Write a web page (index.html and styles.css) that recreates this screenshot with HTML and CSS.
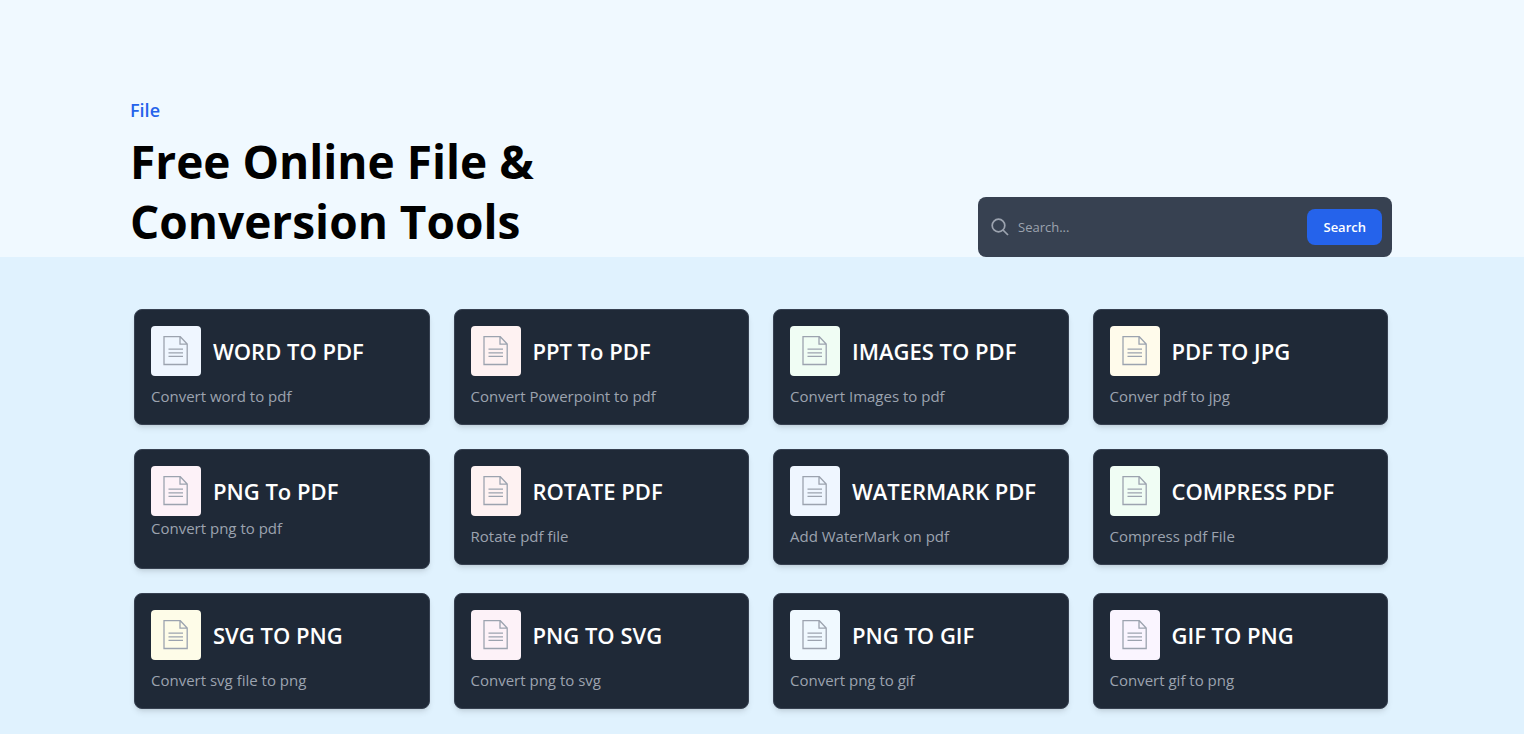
FILE: index.html
```html
<!DOCTYPE html>
<html lang="en">
<head>
<meta charset="utf-8">
<meta name="viewport" content="width=device-width, initial-scale=1">
<title>Free Online File &amp; Conversion Tools</title>
<link rel="stylesheet" href="styles.css">
</head>
<body>
<svg class="sprite" aria-hidden="true">
  <symbol id="doc" viewBox="0 0 26 30">
    <path d="M1 .7H17.300L24.200 8V28.500H1Z M17 .7V8.200H24.200" fill="none" stroke="#9ca3af" stroke-width="1.300"/>
    <path d="M5.500 13.200H20 M5.500 16.800H20 M5.500 20.300H20" fill="none" stroke="#9ca3af" stroke-width="1.300"/>
  </symbol>
</svg>
<header class="hero">
  <div class="hero-text">
    <p class="eyebrow">File</p>
    <h1 class="title">Free Online File &amp; Conversion Tools</h1>
  </div>
  <form class="search" role="search">
    <svg class="search-icon" viewBox="0 0 20 20" aria-hidden="true"><circle cx="8.500" cy="8.500" r="6.300"/><path d="M13 13L18 18"/></svg>
    <input class="search-input" type="search" placeholder="Search..." aria-label="Search tools">
    <button class="search-button" type="submit">Search</button>
  </form>
</header>
<main class="tools">
  <article class="card"><div class="card-head"><span class="tile blue"><svg class="doc"><use href="#doc"/></svg></span><h2 class="name">WORD TO PDF</h2></div><p class="desc">Convert word to pdf</p></article>
  <article class="card"><div class="card-head"><span class="tile red"><svg class="doc"><use href="#doc"/></svg></span><h2 class="name">PPT To PDF</h2></div><p class="desc">Convert Powerpoint to pdf</p></article>
  <article class="card"><div class="card-head"><span class="tile green"><svg class="doc"><use href="#doc"/></svg></span><h2 class="name">IMAGES TO PDF</h2></div><p class="desc">Convert Images to pdf</p></article>
  <article class="card"><div class="card-head"><span class="tile amber"><svg class="doc"><use href="#doc"/></svg></span><h2 class="name">PDF TO JPG</h2></div><p class="desc">Conver pdf to jpg</p></article>
  <article class="card card-tight"><div class="card-head"><span class="tile pink"><svg class="doc"><use href="#doc"/></svg></span><h2 class="name">PNG To PDF</h2></div><p class="desc">Convert png to pdf</p></article>
  <article class="card"><div class="card-head"><span class="tile red"><svg class="doc"><use href="#doc"/></svg></span><h2 class="name">ROTATE PDF</h2></div><p class="desc">Rotate pdf file</p></article>
  <article class="card"><div class="card-head"><span class="tile blue"><svg class="doc"><use href="#doc"/></svg></span><h2 class="name">WATERMARK PDF</h2></div><p class="desc">Add WaterMark on pdf</p></article>
  <article class="card"><div class="card-head"><span class="tile green"><svg class="doc"><use href="#doc"/></svg></span><h2 class="name">COMPRESS PDF</h2></div><p class="desc">Compress pdf File</p></article>
  <article class="card"><div class="card-head"><span class="tile yellow"><svg class="doc"><use href="#doc"/></svg></span><h2 class="name">SVG TO PNG</h2></div><p class="desc">Convert svg file to png</p></article>
  <article class="card"><div class="card-head"><span class="tile pink"><svg class="doc"><use href="#doc"/></svg></span><h2 class="name">PNG TO SVG</h2></div><p class="desc">Convert png to svg</p></article>
  <article class="card"><div class="card-head"><span class="tile sky"><svg class="doc"><use href="#doc"/></svg></span><h2 class="name">PNG TO GIF</h2></div><p class="desc">Convert png to gif</p></article>
  <article class="card"><div class="card-head"><span class="tile purple"><svg class="doc"><use href="#doc"/></svg></span><h2 class="name">GIF TO PNG</h2></div><p class="desc">Convert gif to png</p></article>
</main>
</body>
</html>
```
FILE: styles.css
```css
* { box-sizing: border-box; }
body {
  margin: 0;
  background: #e0f2fe;
  font-family: "Segoe UI", "Open Sans", "Noto Sans", sans-serif;
  font-size: 16px;
  line-height: 24px;
}
h1, h2, p { margin: 0; }
.sprite { display: none; }
.hero {
  display: flex;
  justify-content: space-between;
  align-items: flex-end;
  padding: 96px 132px 0 130px;
  background: #f0f9ff;
}
.hero-text { max-width: 480px; padding-bottom: 6px; }
.eyebrow { margin-bottom: 7px; color: #2563eb; font-size: 18px; line-height: 28px; font-weight: 600; }
.title { color: #000; font-size: 46px; line-height: 60px; font-weight: 700; }
.search {
  display: flex;
  align-items: center;
  gap: 8px;
  flex: 0 1 414px;
  padding: 12px 10px 12px 12px;
  border-radius: 8px;
  background: #374151;
}
.search-icon { flex: none; width: 20px; height: 20px; fill: none; stroke: #9ca3af; stroke-width: 1.700; }
.search-input {
  flex: 1;
  min-width: 0;
  padding: 0;
  border: 0;
  outline: 0;
  background: transparent;
  color: #fff;
  font: 13px/20px "Segoe UI", "Open Sans", "Noto Sans", sans-serif;
}
.search-input::placeholder { color: #9ca3af; opacity: 1; }
.search-button {
  padding: 8px 16px;
  border: 0;
  border-radius: 8px;
  background: #2563eb;
  color: #fff;
  font: 600 13px/20px "Segoe UI", "Open Sans", "Noto Sans", sans-serif;
}
.tools {
  display: grid;
  grid-template-columns: repeat(4, minmax(0, 1fr));
  align-items: start;
  gap: 24px;
  padding: 52px 136px 24px 134px;
}
.card {
  padding: 16px;
  border: 1px solid #374151;
  border-radius: 8px;
  background: #1f2937;
  box-shadow: 0 4px 6px -1px rgba(0, 0, 0, .1), 0 2px 4px -2px rgba(0, 0, 0, .1);
}
.card-head { display: flex; align-items: center; gap: 12px; margin-bottom: 8px; }
.card-tight .card-head { margin-bottom: 0; }
.card-tight .desc { margin-bottom: 12px; }
.tile { display: flex; flex: none; align-items: center; justify-content: center; width: 50px; height: 50px; border-radius: 4px; }
.doc { width: 26px; height: 30px; }
.name { color: #fff; font-size: 22px; line-height: 30px; font-weight: 600; white-space: nowrap; }
.desc { color: #9ca3af; font-size: 15px; }
.blue { background: #eff6ff; }
.red { background: #fef2f2; }
.green { background: #f0fdf4; }
.amber { background: #fffbeb; }
.pink { background: #fdf2f8; }
.yellow { background: #fefce8; }
.sky { background: #f0f9ff; }
.purple { background: #faf5ff; }
```
